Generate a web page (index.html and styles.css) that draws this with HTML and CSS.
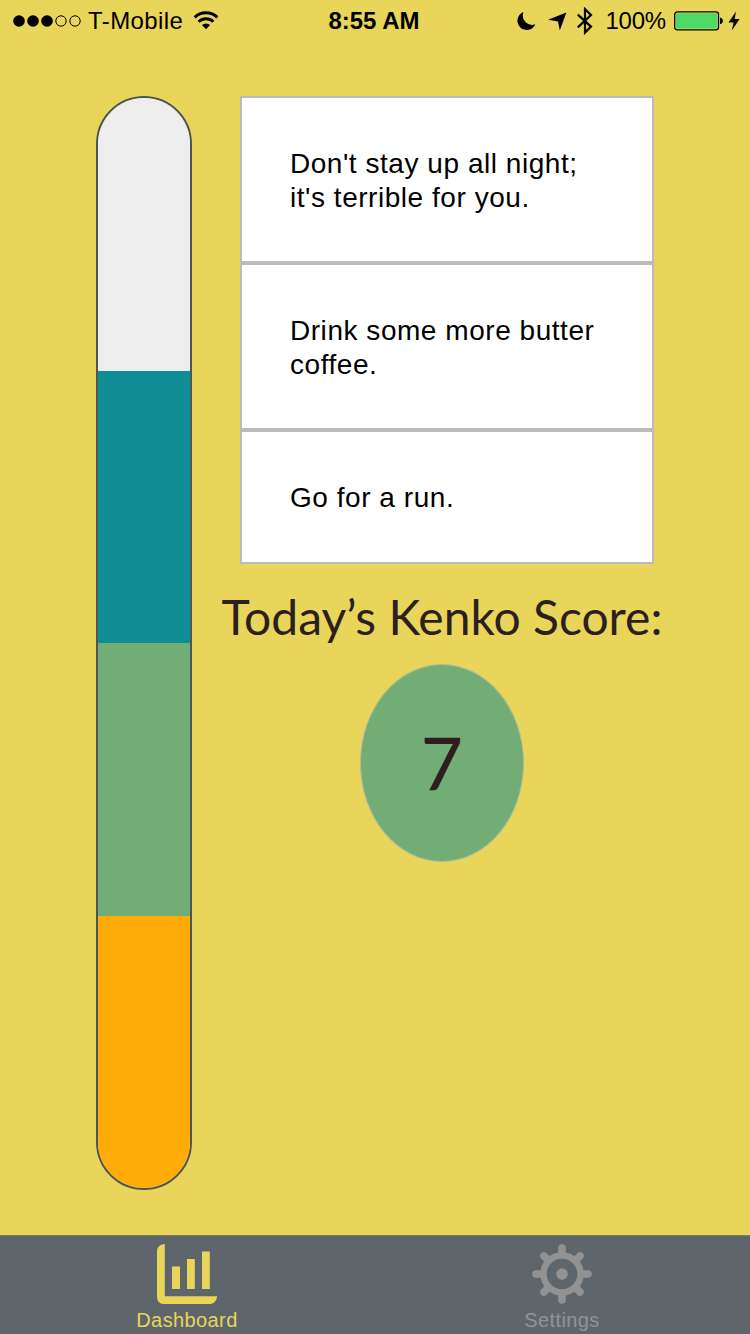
FILE: index.html
```html
<!DOCTYPE html>
<html lang="en">
<head>
    <meta charset="UTF-8">
    <meta name="viewport" content="width=device-width, initial-scale=1.0">
    <title>Kenko</title>
    <link rel="stylesheet" href="styles.css">
</head>
<body>
    <div class="status-bar">
        <div class="status-left">
            <svg class="signal" width="68" height="12" viewBox="0 0 68 12">
                <circle cx="6" cy="6" r="5.8"/>
                <circle cx="20" cy="6" r="5.8"/>
                <circle cx="34" cy="6" r="5.8"/>
                <circle class="empty" cx="48" cy="6" r="5.2"/>
                <circle class="empty" cx="62" cy="6" r="5.2"/>
            </svg>
            <span class="carrier">T-Mobile</span>
            <svg class="wifi" width="26" height="20" viewBox="0 0 26 20">
                <path class="arc" d="M1.7 6.4a16.2 16.2 0 0 1 22.6 0"/>
                <path class="arc" d="M5.6 10.8a10.6 10.6 0 0 1 14.8 0"/>
                <path d="M13 18.2l-4.1-4.1a5.9 5.9 0 0 1 8.2 0z"/>
            </svg>
        </div>
        <div class="status-time">8:55 AM</div>
        <div class="status-right">
            <svg class="moon" width="20" height="20" viewBox="0 0 20 20">
                <path d="M7.6 1A9.3 9.3 0 1 0 19.4 13.2A9.2 9.2 0 0 1 7.6 1z"/>
            </svg>
            <svg class="location" width="20" height="20" viewBox="0 0 20 20">
                <path d="M19.4 1.6L1 8.8l10 1.7L12.8 19.4z"/>
            </svg>
            <svg class="bluetooth" width="18" height="28" viewBox="0 0 18 28">
                <path d="M1.8 7.6L15 19.6L9 25.6V2.2L15 8L1.8 20.4"/>
            </svg>
            <span class="percent">100%</span>
            <svg class="battery" width="50" height="20" viewBox="0 0 50 20">
                <rect class="shell" x="0.7" y="0.9" width="43.8" height="17.9" rx="2.6"/>
                <rect class="charge" x="2" y="2.2" width="41.2" height="15.3" rx="1.4"/>
                <path d="M46 6.4c3.8 0.6 3.8 6.2 0 6.8z"/>
            </svg>
            <svg class="bolt" width="12" height="20" viewBox="0 0 12 20">
                <path d="M8 0.6L0.5 11.5L5.6 11.6L3.8 19.4L11.6 8L6.6 7.9z"/>
            </svg>
        </div>
    </div>

    <div class="dashboard">
        <div class="meter">
            <div class="segment empty-part"></div>
            <div class="segment teal"></div>
            <div class="segment green"></div>
            <div class="segment orange"></div>
        </div>
        <div class="content">
            <div class="tips">
                <div class="tip">Don't stay up all night;<br>it's terrible for you.</div>
                <div class="tip">Drink some more butter<br>coffee.</div>
                <div class="tip">Go for a run.</div>
            </div>
            <h1>Today’s Kenko Score:</h1>
            <div class="score">7</div>
        </div>
    </div>

    <div class="tab-bar">
        <a class="tab active">
            <svg width="60" height="60" viewBox="0 0 60 60">
                <path d="M7.8 0C3 0.4 0 3 0 7.6V52.4Q0 60 7.6 60H52C57 60 59.6 57 60 52.2H7.8z"/>
                <rect x="15" y="22.5" width="8" height="22.5"/>
                <rect x="30" y="15" width="7.8" height="30"/>
                <rect x="45" y="7.5" width="7.8" height="37.5"/>
            </svg>
            <span>Dashboard</span>
        </a>
        <a class="tab">
            <svg width="60" height="60" viewBox="0 0 60 60">
                <circle class="ring" cx="30" cy="30" r="18.5"/>
                <circle cx="30" cy="30" r="5.8"/>
                <path class="teeth" d="M30 10V4M30 50v6M10 30H4M50 30h6M15.4 15.4L12 12M44.6 15.4L48 12M15.4 44.6L12 48M44.6 44.6L48 48"/>
            </svg>
            <span>Settings</span>
        </a>
    </div>
</body>
</html>
```
FILE: styles.css
```css
* {
    box-sizing: border-box;
}
body {
    margin: 0;
    height: 1334px;
    display: flex;
    flex-direction: column;
    overflow: hidden;
    background: #e8d559;
    color: #000;
    font-family: "Liberation Sans", Arial, sans-serif;
}
svg {
    display: block;
    flex: none;
}

/* Status bar */
.status-bar {
    display: grid;
    grid-template-columns: 1fr 94px 1fr;
    align-items: center;
    height: 42px;
    padding: 0 10px 0 8px;
    font-size: 24px;
    line-height: 42px;
    white-space: nowrap;
}
.status-left,
.status-right {
    display: flex;
    align-items: center;
}
.status-left {
    padding-left: 5px;
}
.status-right {
    justify-content: flex-end;
}
.signal .empty {
    fill: none;
    stroke: #000;
    stroke-width: 1;
}
.carrier {
    margin-left: 7px;
    letter-spacing: 0.4px;
}
.wifi {
    margin-left: 10px;
}
.wifi .arc {
    fill: none;
    stroke: #000;
    stroke-width: 3;
}
.status-time {
    font-weight: bold;
    text-align: center;
}
.location {
    margin-left: 11px;
}
.bluetooth {
    margin-left: 9px;
    fill: none;
    stroke: #000;
    stroke-width: 2.2;
}
.percent {
    margin-left: 11px;
    letter-spacing: -0.2px;
}
.battery {
    margin-left: 8px;
}
.shell {
    fill: none;
    stroke: #000;
    stroke-width: 1.3;
}
.charge {
    fill: #4cd964;
}
.bolt {
    margin-left: 4px;
}

/* Dashboard */
.dashboard {
    flex: 1;
    display: flex;
    padding: 54px 88px 45px 96px;
}
.meter {
    flex: none;
    display: flex;
    flex-direction: column;
    width: 96px;
    height: 1094px;
    border: 2px solid #4d5559;
    border-radius: 48px;
    overflow: hidden;
}
.segment {
    flex: 1;
}
.empty-part {
    background: #eee;
}
.teal {
    background: #0f8c94;
}
.green {
    background: #72ad75;
}
.orange {
    background: #ffab08;
}
.content {
    flex: none;
    display: flex;
    flex-direction: column;
    align-items: center;
    width: 444px;
    margin-left: 28px;
}
.tips {
    width: 414px;
    margin-left: 10px;
}
.tip {
    padding: 49px 48px 47px;
    border: 2px solid #bbb;
    background: #fff;
    font-size: 28px;
    line-height: 33.5px;
    letter-spacing: 0.54px;
    white-space: nowrap;
}
h1 {
    margin: 24px 0 0;
    color: #2d1f1f;
    font-family: Lato, sans-serif;
    font-size: 48px;
    font-weight: normal;
    line-height: 58px;
    white-space: nowrap;
}
.score {
    width: 164px;
    height: 198px;
    margin-top: 18px;
    border: 1px solid #aebb9c;
    border-radius: 50%;
    background: #72ad75;
    color: #2d1f1f;
    font-family: Lato, sans-serif;
    font-size: 72px;
    line-height: 194px;
    text-align: center;
    -webkit-text-stroke: 0.4px #2d1f1f;
}

/* Tab bar */
.tab-bar {
    display: flex;
    height: 99px;
    border-top: 1px solid #7d7c5c;
    background: #5f666b;
}
.tab {
    flex: 1;
    display: flex;
    flex-direction: column;
    align-items: center;
    padding-top: 8px;
    color: #929292;
    fill: #929292;
    font-size: 20px;
    line-height: 24px;
    letter-spacing: 0.4px;
}
.tab span {
    margin-top: 4px;
}
.tab.active {
    flex: 0 0 374px;
    color: #e8d559;
    fill: #e8d559;
}
.ring,
.teeth {
    fill: none;
    stroke: #929292;
    stroke-width: 6.4;
    stroke-linecap: round;
}
.teeth {
    stroke-width: 7.6;
}
```
